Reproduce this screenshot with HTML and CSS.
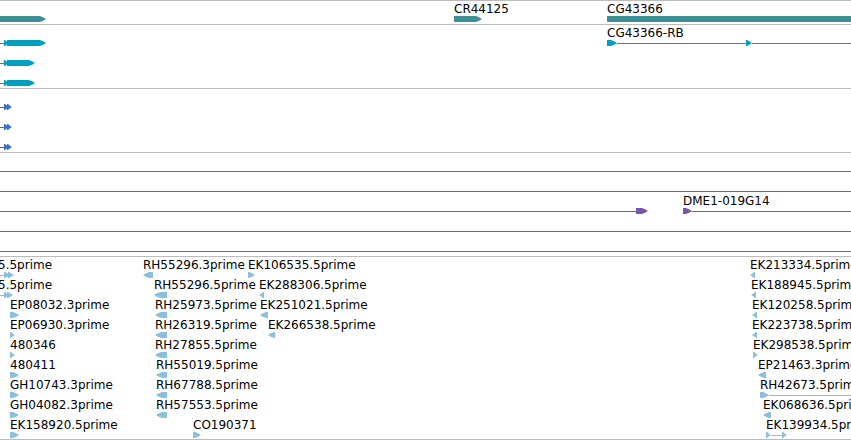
FILE: index.html
```html
<!DOCTYPE html>
<html lang="en">
<head>
    <meta charset="UTF-8">
    <meta name="viewport" content="width=device-width, initial-scale=1.0">
    <title>Genome Browser</title>
    <link rel="stylesheet" href="styles.css">
</head>
<body>
    <main class="browser">
        <!-- Genes -->
        <section class="track genes">
            <div class="row">
                <div class="feature" style="left: 0px">
                    <div class="label"></div>
                    <div class="glyph"><span class="exon fwd" style="width: 46px"></span></div>
                </div>
                <div class="feature" style="left: 454px">
                    <div class="label">CR44125</div>
                    <div class="glyph"><span class="exon fwd" style="width: 28px"></span></div>
                </div>
                <div class="feature to-edge" style="left: 607px">
                    <div class="label">CG43366</div>
                    <div class="glyph"><span class="exon rest"></span></div>
                </div>
            </div>
        </section>

        <!-- Transcripts -->
        <section class="track transcripts">
            <div class="row">
                <div class="feature" style="left: 0px">
                    <div class="label"></div>
                    <div class="glyph"><span class="intron" style="width: 4px"></span><span class="exon fwd" style="width: 5px"></span><span class="exon fwd joined" style="width: 39px"></span></div>
                </div>
                <div class="feature to-edge" style="left: 607px">
                    <div class="label">CG43366-RB</div>
                    <div class="glyph"><span class="exon fwd" style="width: 10px"></span><span class="intron" style="width: 129px"></span><span class="exon fwd" style="width: 6px"></span><span class="intron rest"></span></div>
                </div>
            </div>
            <div class="row">
                <div class="feature" style="left: 0px">
                    <div class="label"></div>
                    <div class="glyph"><span class="intron" style="width: 4px"></span><span class="exon fwd" style="width: 5px"></span><span class="exon fwd joined" style="width: 28px"></span></div>
                </div>
            </div>
            <div class="row">
                <div class="feature" style="left: 0px">
                    <div class="label"></div>
                    <div class="glyph"><span class="intron" style="width: 4px"></span><span class="exon fwd" style="width: 5px"></span><span class="exon fwd joined" style="width: 28px"></span></div>
                </div>
            </div>
        </section>

        <!-- Coding sequences -->
        <section class="track cds">
            <div class="row">
                <div class="feature" style="left: 0px">
                    <div class="label"></div>
                    <div class="glyph"><span class="intron" style="width: 4px"></span><span class="exon fwd" style="width: 5px"></span><span class="exon fwd joined" style="width: 5px"></span></div>
                </div>
            </div>
            <div class="row">
                <div class="feature" style="left: 0px">
                    <div class="label"></div>
                    <div class="glyph"><span class="intron" style="width: 4px"></span><span class="exon fwd" style="width: 5px"></span><span class="exon fwd joined" style="width: 5px"></span></div>
                </div>
            </div>
            <div class="row">
                <div class="feature" style="left: 0px">
                    <div class="label"></div>
                    <div class="glyph"><span class="intron" style="width: 4px"></span><span class="exon fwd" style="width: 5px"></span><span class="exon fwd joined" style="width: 5px"></span></div>
                </div>
            </div>
        </section>

        <!-- BAC ends -->
        <section class="track bacs">
            <div class="row">
                <div class="feature to-edge" style="left: 0px">
                    <div class="label"></div>
                    <div class="glyph"><span class="intron rest"></span></div>
                </div>
            </div>
            <div class="row">
                <div class="feature to-edge" style="left: 0px">
                    <div class="label"></div>
                    <div class="glyph"><span class="intron rest"></span></div>
                </div>
            </div>
            <div class="row">
                <div class="feature" style="left: 0px">
                    <div class="label"></div>
                    <div class="glyph"><span class="intron" style="width: 636px"></span><span class="exon fwd" style="width: 12px"></span></div>
                </div>
                <div class="feature to-edge" style="left: 683px">
                    <div class="label">DME1-019G14</div>
                    <div class="glyph"><span class="exon fwd" style="width: 9px"></span><span class="intron rest"></span></div>
                </div>
            </div>
            <div class="row">
                <div class="feature to-edge" style="left: 0px">
                    <div class="label"></div>
                    <div class="glyph"><span class="intron rest"></span></div>
                </div>
            </div>
            <div class="row">
                <div class="feature to-edge" style="left: 0px">
                    <div class="label"></div>
                    <div class="glyph"><span class="intron rest"></span></div>
                </div>
            </div>
        </section>

        <!-- ESTs -->
        <section class="track ests">
            <div class="row">
                <div class="feature" style="left: -2px">
                    <div class="label">5.5prime</div>
                    <div class="glyph"><span class="intron" style="width: 6px"></span><span class="exon fwd" style="width: 6px"></span><span class="exon fwd joined" style="width: 6px"></span></div>
                </div>
                <div class="feature" style="left: 143px">
                    <div class="label">RH55296.3prime</div>
                    <div class="glyph"><span class="exon rev" style="width: 10px"></span></div>
                </div>
                <div class="feature" style="left: 248px">
                    <div class="label">EK106535.5prime</div>
                    <div class="glyph"><span class="exon fwd" style="width: 7px"></span></div>
                </div>
                <div class="feature" style="left: 750px">
                    <div class="label">EK213334.5prime</div>
                    <div class="glyph"><span class="exon rev" style="width: 5px"></span></div>
                </div>
            </div>
            <div class="row">
                <div class="feature" style="left: -2px">
                    <div class="label">5.5prime</div>
                    <div class="glyph"><span class="intron" style="width: 6px"></span><span class="exon fwd" style="width: 5px"></span><span class="exon fwd joined" style="width: 6px"></span></div>
                </div>
                <div class="feature" style="left: 154px">
                    <div class="label">RH55296.5prime</div>
                    <div class="glyph"><span class="exon rev" style="width: 13px"></span></div>
                </div>
                <div class="feature" style="left: 259px">
                    <div class="label">EK288306.5prime</div>
                    <div class="glyph"><span class="exon rev" style="width: 5px"></span></div>
                </div>
                <div class="feature" style="left: 751px">
                    <div class="label">EK188945.5prime</div>
                    <div class="glyph"><span class="exon rev" style="width: 5px"></span></div>
                </div>
            </div>
            <div class="row">
                <div class="feature" style="left: 10px">
                    <div class="label">EP08032.3prime</div>
                    <div class="glyph"><span class="exon fwd" style="width: 9px"></span></div>
                </div>
                <div class="feature" style="left: 155px">
                    <div class="label">RH25973.5prime</div>
                    <div class="glyph"><span class="exon rev" style="width: 12px"></span></div>
                </div>
                <div class="feature" style="left: 260px">
                    <div class="label">EK251021.5prime</div>
                    <div class="glyph"><span class="exon rev" style="width: 8px"></span></div>
                </div>
                <div class="feature" style="left: 752px">
                    <div class="label">EK120258.5prime</div>
                    <div class="glyph"><span class="exon rev" style="width: 5px"></span></div>
                </div>
            </div>
            <div class="row">
                <div class="feature" style="left: 10px">
                    <div class="label">EP06930.3prime</div>
                    <div class="glyph"><span class="exon fwd" style="width: 5px"></span></div>
                </div>
                <div class="feature" style="left: 155px">
                    <div class="label">RH26319.5prime</div>
                    <div class="glyph"><span class="exon rev" style="width: 12px"></span></div>
                </div>
                <div class="feature" style="left: 268px">
                    <div class="label">EK266538.5prime</div>
                    <div class="glyph"><span class="exon rev" style="width: 7px"></span></div>
                </div>
                <div class="feature" style="left: 752px">
                    <div class="label">EK223738.5prime</div>
                    <div class="glyph"><span class="exon rev" style="width: 5px"></span></div>
                </div>
            </div>
            <div class="row">
                <div class="feature" style="left: 10px">
                    <div class="label">480346</div>
                    <div class="glyph"><span class="exon fwd" style="width: 5px"></span></div>
                </div>
                <div class="feature" style="left: 155px">
                    <div class="label">RH27855.5prime</div>
                    <div class="glyph"><span class="exon rev" style="width: 12px"></span></div>
                </div>
                <div class="feature" style="left: 753px">
                    <div class="label">EK298538.5prime</div>
                    <div class="glyph"><span class="exon fwd" style="width: 5px"></span></div>
                </div>
            </div>
            <div class="row">
                <div class="feature" style="left: 10px">
                    <div class="label">480411</div>
                    <div class="glyph"><span class="exon fwd" style="width: 9px"></span></div>
                </div>
                <div class="feature" style="left: 156px">
                    <div class="label">RH55019.5prime</div>
                    <div class="glyph"><span class="exon rev" style="width: 11px"></span></div>
                </div>
                <div class="feature" style="left: 758px">
                    <div class="label">EP21463.3prime</div>
                    <div class="glyph"><span class="exon rev" style="width: 8px"></span></div>
                </div>
            </div>
            <div class="row">
                <div class="feature" style="left: 10px">
                    <div class="label">GH10743.3prime</div>
                    <div class="glyph"><span class="exon fwd" style="width: 9px"></span></div>
                </div>
                <div class="feature" style="left: 156px">
                    <div class="label">RH67788.5prime</div>
                    <div class="glyph"><span class="exon rev" style="width: 11px"></span></div>
                </div>
                <div class="feature to-edge" style="left: 760px">
                    <div class="label">RH42673.5prime</div>
                    <div class="glyph"><span class="exon fwd" style="width: 9px"></span><span class="intron rest"></span></div>
                </div>
            </div>
            <div class="row">
                <div class="feature" style="left: 10px">
                    <div class="label">GH04082.3prime</div>
                    <div class="glyph"><span class="exon fwd" style="width: 9px"></span></div>
                </div>
                <div class="feature" style="left: 156px">
                    <div class="label">RH57553.5prime</div>
                    <div class="glyph"><span class="exon rev" style="width: 11px"></span></div>
                </div>
                <div class="feature" style="left: 763px">
                    <div class="label">EK068636.5prime</div>
                    <div class="glyph"><span class="exon rev" style="width: 8px"></span></div>
                </div>
            </div>
            <div class="row">
                <div class="feature" style="left: 10px">
                    <div class="label">EK158920.5prime</div>
                    <div class="glyph"><span class="exon fwd" style="width: 9px"></span></div>
                </div>
                <div class="feature" style="left: 193px">
                    <div class="label">CO190371</div>
                    <div class="glyph"><span class="exon fwd" style="width: 8px"></span></div>
                </div>
                <div class="feature" style="left: 766px">
                    <div class="label">EK139934.5prime</div>
                    <div class="glyph"><span class="exon fwd" style="width: 5px"></span><span class="intron" style="width: 11px"></span><span class="exon fwd" style="width: 5px"></span></div>
                </div>
            </div>
        </section>
    </main>
</body>
</html>
```
FILE: styles.css
```css
body {
    margin: 0;
    background-color: #fff;
    color: #000;
    font-family: "DejaVu Sans", Verdana, sans-serif;
    font-size: 12px;
    line-height: 17px;
}

.browser {
    overflow: hidden;
    border-bottom: 1px solid #bbb;
}

/* Tracks */
.track {
    border-top: 1px solid #bbb;
    padding-bottom: 3px;
}

.track:last-child {
    padding-bottom: 2px;
}

.row {
    position: relative;
    height: 20px;
}

/* Features sit at their sequence position */
.feature {
    position: absolute;
    top: 0;
}

.to-edge {
    right: 0;
}

.label {
    height: 15px;
    white-space: nowrap;
}

.glyph {
    display: flex;
    height: 6px;
}

.exon {
    flex: none;
    background-color: currentColor;
}

/* Arrow heads show the strand */
.fwd {
    clip-path: polygon(0 0, max(1px, 100% - 6px) 0, calc(100% - 2px) 30%, 100% 50%, calc(100% - 2px) 70%, max(1px, 100% - 6px) 100%, 0 100%);
}

.rev {
    clip-path: polygon(100% 0, min(100% - 1px, 6px) 0, 2px 30%, 0 50%, 2px 70%, min(100% - 1px, 6px) 100%, 100% 100%);
}

.joined {
    margin-left: -2px;
}

.intron {
    flex: none;
    height: 1px;
    margin-top: 3px;
    background-color: currentColor;
}

.rest {
    flex: 1;
}

/* Track colors */
.genes .glyph {
    color: #3c8f95;
}

.transcripts .glyph {
    color: #009fbf;
}

.cds .glyph {
    color: #3a6fcc;
}

.bacs .glyph {
    color: #7856aa;
}

.ests .glyph {
    color: #8abfde;
}
```
